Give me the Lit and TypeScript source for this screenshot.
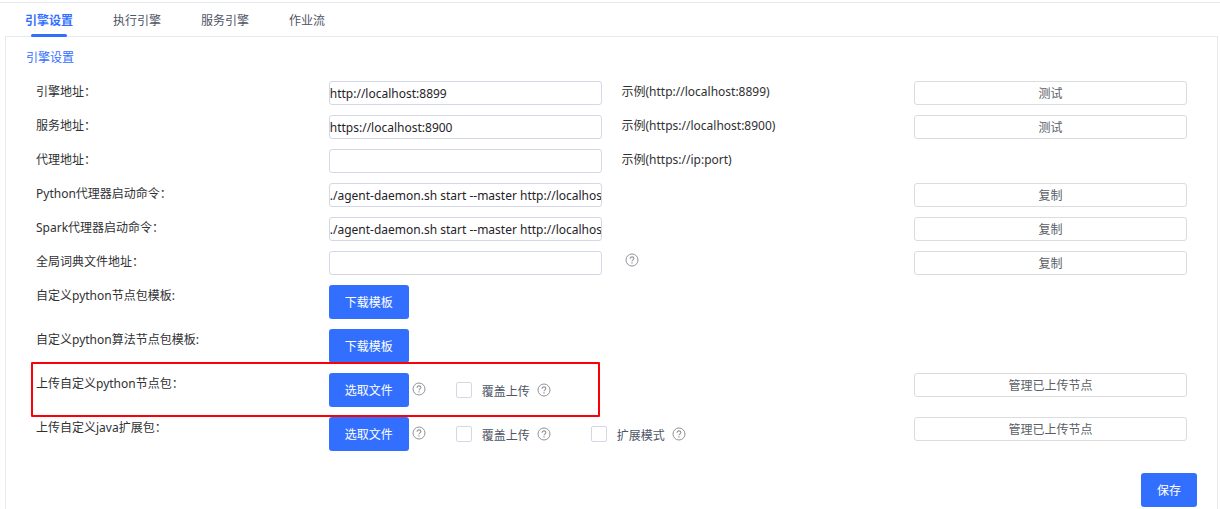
import { LitElement, html, css, svg, nothing, TemplateResult } from "lit";
import { customElement, property, state } from "lit/decorators.js";

@customElement("help-icon")
class HelpIcon extends LitElement {
  static styles = css`
    :host {
      display: inline-flex;
      width: 14px;
      height: 14px;
      color: #909399;
    }
    .icon {
      width: 14px;
      height: 14px;
    }
  `;

  render() {
    return html`<svg class="icon" viewBox="0 0 14 14" fill="none" stroke="currentColor" role="img" aria-label="帮助">
      ${svg`<circle cx="7" cy="7" r="6" stroke-width="1"></circle>
      <path d="M5.1 5.7C5.1 4.6 5.9 3.9 7 3.9s1.9.7 1.9 1.7c0 1.2-1.9 1.3-1.9 2.6" stroke-width="1.1"></path>
      <path d="M7 9.2v1.2" stroke-width="1.2"></path>`}
    </svg>`;
  }
}

@customElement("setting-row")
class SettingRow extends LitElement {
  @property() label = "";
  @property() value: string | undefined;
  @property() hint = "";
  @property() action = "";
  @property() primary = "";
  @property({ type: Boolean }) help = false;
  @property({ type: Boolean }) marked = false;
  @property({ attribute: false }) options: string[] = [];

  static styles = css`
    :host {
      display: block;
      position: relative;
    }
    .row {
      display: grid;
      grid-template-columns: repeat(4, minmax(0, 1fr));
      column-gap: 20px;
      align-items: start;
    }
    .label,
    .hint {
      line-height: 22px;
      color: #303133;
      white-space: nowrap;
    }
    .field {
      box-sizing: border-box;
      width: 100%;
      height: 24px;
      margin: 0;
      padding: 0;
      border: 1px solid #d4d7e5;
      border-radius: 3px;
      background: #fff;
      font: inherit;
      color: #1f2329;
      outline: none;
    }
    .action {
      grid-column: 4;
      height: 24px;
      padding: 2px 0 0;
      border: 1px solid #dcdcdf;
      border-radius: 3px;
      background: #fff;
      font: inherit;
      color: #5a5e66;
      cursor: pointer;
    }
    .controls {
      grid-column: 2 / 4;
      grid-row: 1;
      display: flex;
      align-items: center;
    }
    .primary {
      height: 34px;
      padding: 2px 16px 0;
      border: 0;
      border-radius: 3px;
      background: #326fff;
      font: inherit;
      color: #fff;
      cursor: pointer;
    }
    .help {
      margin-left: 3px;
    }
    .controls .help {
      padding-bottom: 2px;
    }
    .icon-cell {
      display: flex;
      padding-top: 2px;
    }
    .option {
      display: flex;
      align-items: center;
      margin-left: 30px;
      color: #4e5465;
    }
    .option + .option {
      margin-left: 40px;
    }
    .box {
      appearance: none;
      box-sizing: border-box;
      width: 16px;
      height: 16px;
      margin: 0 10px 0 0;
      border: 1px solid #d4d7e5;
      border-radius: 2px;
      background: #fff;
    }
    .box:checked {
      background: #326fff;
      border-color: #326fff;
    }
    .caption {
      display: flex;
      align-items: center;
      gap: 7px;
    }
    .caption-text {
      padding-top: 4px;
    }
    .mark {
      position: absolute;
      top: -11px;
      bottom: -10px;
      left: -5px;
      width: calc(50% - 7px);
      box-sizing: border-box;
      border: 2px solid #fb0007;
      border-radius: 1px;
      pointer-events: none;
    }
  `;

  private renderPrimary(): TemplateResult {
    return html`<div class="controls">
      <button class="primary" type="button">${this.primary}</button>
      ${this.options.length ? html`<help-icon class="help"></help-icon>` : nothing}
      ${this.options.map(
        (o) => html`<label class="option">
          <input class="box" type="checkbox" />
          <span class="caption"><span class="caption-text">${o}</span><help-icon></help-icon></span>
        </label>`
      )}
    </div>`;
  }

  render() {
    return html`<div class="row">
        ${this.value === undefined
          ? html`<span class="label">${this.label}</span>${this.renderPrimary()}`
          : html`<label class="label" for="field">${this.label}</label>
              <input class="field" id="field" type="text" .value=${this.value} />`}
        ${this.hint ? html`<span class="hint">${this.hint}</span>` : nothing}
        ${this.help ? html`<span class="icon-cell"><help-icon class="help"></help-icon></span>` : nothing}
        ${this.action ? html`<button class="action" type="button">${this.action}</button>` : nothing}
      </div>
      ${this.marked ? html`<div class="mark"></div>` : nothing}`;
  }
}

interface Row {
  label: string;
  value?: string;
  hint?: string;
  action?: string;
  primary?: string;
  help?: boolean;
  marked?: boolean;
  options?: string[];
}

const TABS = ["引擎设置", "执行引擎", "服务引擎", "作业流"];
const COMMAND = "./agent-daemon.sh start --master http://localhost:8899";

const ROWS: Row[] = [
  { label: "引擎地址：", value: "http://localhost:8899", hint: "示例(http://localhost:8899)", action: "测试" },
  { label: "服务地址：", value: "https://localhost:8900", hint: "示例(https://localhost:8900)", action: "测试" },
  { label: "代理地址：", value: "", hint: "示例(https://ip:port)" },
  { label: "Python代理器启动命令：", value: COMMAND, action: "复制" },
  { label: "Spark代理器启动命令：", value: COMMAND, action: "复制" },
  { label: "全局词典文件地址：", value: "", help: true, action: "复制" },
  { label: "自定义python节点包模板:", primary: "下载模板" },
  { label: "自定义python算法节点包模板:", primary: "下载模板" },
  { label: "上传自定义python节点包：", primary: "选取文件", options: ["覆盖上传"], action: "管理已上传节点", marked: true },
  { label: "上传自定义java扩展包：", primary: "选取文件", options: ["覆盖上传", "扩展模式"], action: "管理已上传节点" },
];

@customElement("app-root")
class AppRoot extends LitElement {
  @state() private active = 0;

  static styles = css`
    :host {
      display: flex;
      flex-direction: column;
      box-sizing: border-box;
      min-height: 100vh;
      padding: 2px 2px 0 5px;
      background: linear-gradient(#e8eaf2, #e8eaf2) 0 2px / 100% 1px no-repeat #fff;
      font: 12px/18px "Noto Sans", "Noto Sans CJK SC", sans-serif;
      color: #303133;
    }
    .tabs {
      display: flex;
      gap: 40px;
      padding: 1px 20px 0;
    }
    .tab {
      position: relative;
      height: 33px;
      padding: 3px 0 0;
      border: 0;
      background: none;
      font: inherit;
      color: #4e5465;
      cursor: pointer;
    }
    .selected {
      font-weight: 700;
      color: #326fff;
    }
    .selected::after {
      content: "";
      position: absolute;
      left: 6px;
      right: 6px;
      bottom: -1px;
      height: 3px;
      border-radius: 2px;
      background: #326fff;
    }
    .panel {
      flex: 1;
      display: flex;
      flex-direction: column;
      padding: 10px 20px 2px;
      border: 1px solid #e8eaf2;
      border-bottom: 0;
    }
    .title {
      margin: 0;
      font-size: 12px;
      line-height: 22px;
      font-weight: 400;
      color: #326fff;
    }
    .rows {
      display: flex;
      flex-direction: column;
      gap: 10px;
      padding: 12px 10px 22px;
    }
    .save {
      align-self: flex-end;
      height: 34px;
      padding: 2px 16px 0;
      border: 0;
      border-radius: 3px;
      background: #326fff;
      font: inherit;
      color: #fff;
      cursor: pointer;
    }
  `;

  render() {
    return html`<div class="tabs" role="tablist">
        ${TABS.map(
          (t, i) => html`<button
            class="tab ${i === this.active ? "selected" : ""}"
            type="button"
            role="tab"
            aria-selected=${i === this.active}
            @click=${() => (this.active = i)}
          >${t}</button>`
        )}
      </div>
      <main class="panel">
        <h2 class="title">引擎设置</h2>
        <div class="rows">
          ${ROWS.map(
            (r) => html`<setting-row
              .label=${r.label}
              .value=${r.value}
              .hint=${r.hint ?? ""}
              .action=${r.action ?? ""}
              .primary=${r.primary ?? ""}
              .help=${!!r.help}
              .marked=${!!r.marked}
              .options=${r.options ?? []}
            ></setting-row>`
          )}
        </div>
        <button class="save" type="button">保存</button>
      </main>`;
  }
}
